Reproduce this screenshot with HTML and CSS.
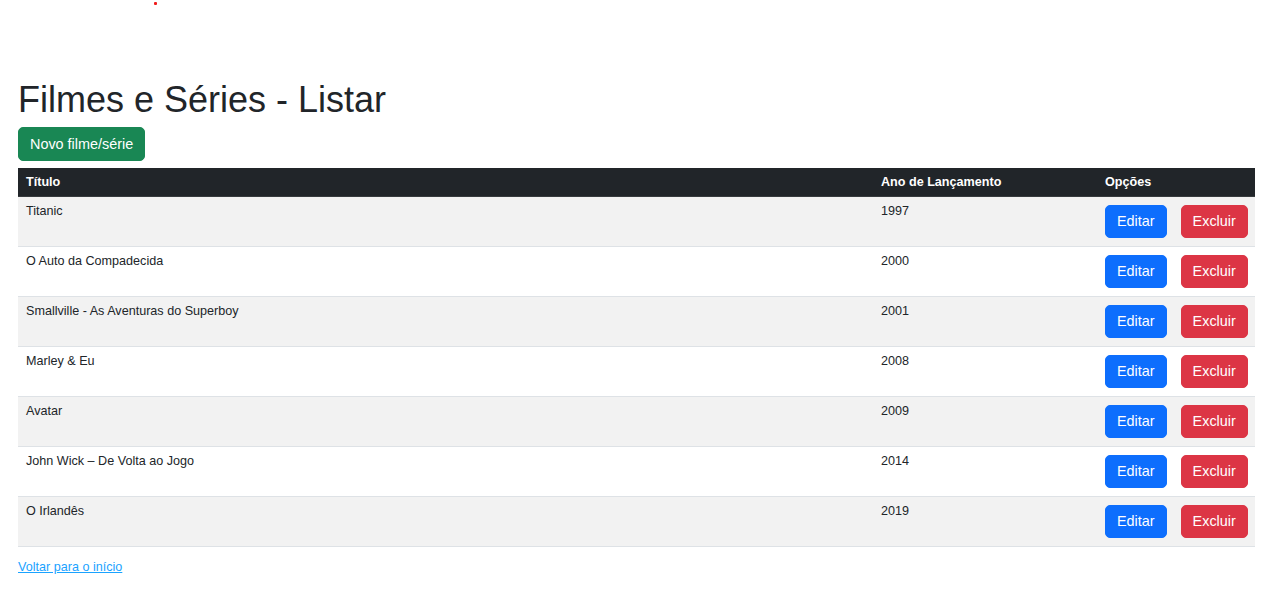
FILE: index.html
```html
<!DOCTYPE html>
<html lang="pt-BR">
<head>
<meta charset="utf-8">
<title>Filmes e Séries - Listar</title>
<link rel="stylesheet" href="styles.css">
</head>
<body>
<div class="dot"></div>
<main class="container">
  <h1 class="title">Filmes e Séries - Listar</h1>
  <a class="btn btn-success" href="#">Novo filme/série</a>
  <table class="table">
    <thead>
      <tr><th class="col-title">Título</th><th class="col-year">Ano de Lançamento</th><th class="col-opt">Opções</th></tr>
    </thead>
    <tbody>
      <tr><td>Titanic</td><td>1997</td><td class="opts"><a class="btn btn-primary" href="#">Editar</a><a class="btn btn-danger" href="#">Excluir</a></td></tr>
      <tr><td>O Auto da Compadecida</td><td>2000</td><td class="opts"><a class="btn btn-primary" href="#">Editar</a><a class="btn btn-danger" href="#">Excluir</a></td></tr>
      <tr><td>Smallville - As Aventuras do Superboy</td><td>2001</td><td class="opts"><a class="btn btn-primary" href="#">Editar</a><a class="btn btn-danger" href="#">Excluir</a></td></tr>
      <tr><td>Marley &amp; Eu</td><td>2008</td><td class="opts"><a class="btn btn-primary" href="#">Editar</a><a class="btn btn-danger" href="#">Excluir</a></td></tr>
      <tr><td>Avatar</td><td>2009</td><td class="opts"><a class="btn btn-primary" href="#">Editar</a><a class="btn btn-danger" href="#">Excluir</a></td></tr>
      <tr><td>John Wick – De Volta ao Jogo</td><td>2014</td><td class="opts"><a class="btn btn-primary" href="#">Editar</a><a class="btn btn-danger" href="#">Excluir</a></td></tr>
      <tr><td>O Irlandês</td><td>2019</td><td class="opts"><a class="btn btn-primary" href="#">Editar</a><a class="btn btn-danger" href="#">Excluir</a></td></tr>
    </tbody>
  </table>
  <a class="back" href="#">Voltar para o início</a>
</main>
</body>
</html>
```
FILE: styles.css
```css
* { box-sizing: border-box; }
html, body { margin: 0; padding: 0; background: #fff; }
body {
  font-family: "Liberation Sans", Arial, sans-serif;
  color: #212529;
  font-size: 14.4px;
  position: relative;
}
.dot {
  position: absolute;
  left: 154px;
  top: 2px;
  width: 3px;
  height: 3px;
  background: #f01c1c;
  border-radius: 1px;
}
.container {
  padding: 78px 22px 0 18px;
  display: flex;
  flex-direction: column;
  align-items: flex-start;
}
.title {
  margin: 0 0 6px 0;
  font-size: 36px;
  font-weight: 400;
  line-height: 43px;
}
.btn {
  display: inline-block;
  font-size: 14.4px;
  line-height: 20px;
  padding: 6px 11px;
  border: 1px solid transparent;
  border-radius: 5px;
  color: #fff;
  text-decoration: none;
}
.btn-success { background: #198754; border-color: #198754; height: 34px; padding-top: 6px; }
.btn-primary { background: #0d6efd; border-color: #0d6efd; height: 33px; padding: 5px 11px; }
.btn-danger { background: #dc3545; border-color: #dc3545; height: 33px; padding: 5px 11px; }
.table {
  margin-top: 7px;
  width: 100%;
  border-collapse: collapse;
  font-size: 12.6px;
}
.table th {
  background: #212529;
  color: #fff;
  font-weight: 700;
  text-align: left;
  padding: 7px 7px 6px 8px;
  line-height: 15px;
  border-bottom: 1px solid #373b3e;
}
.col-title { width: 855px; }
.col-year { width: 224px; }
.table td {
  padding: 8px 7px 8px 8px;
  vertical-align: top;
  line-height: 13px;
  border-bottom: 1px solid #dee2e6;
}
.table tbody tr:nth-child(odd) td { background: #f2f2f2; }
.opts { white-space: nowrap; }
.opts .btn + .btn { margin-left: 14px; }
.back {
  margin-top: 12px;
  font-size: 12.6px;
  line-height: 16px;
  color: #1aa3ff;
  text-decoration: underline;
}
```
